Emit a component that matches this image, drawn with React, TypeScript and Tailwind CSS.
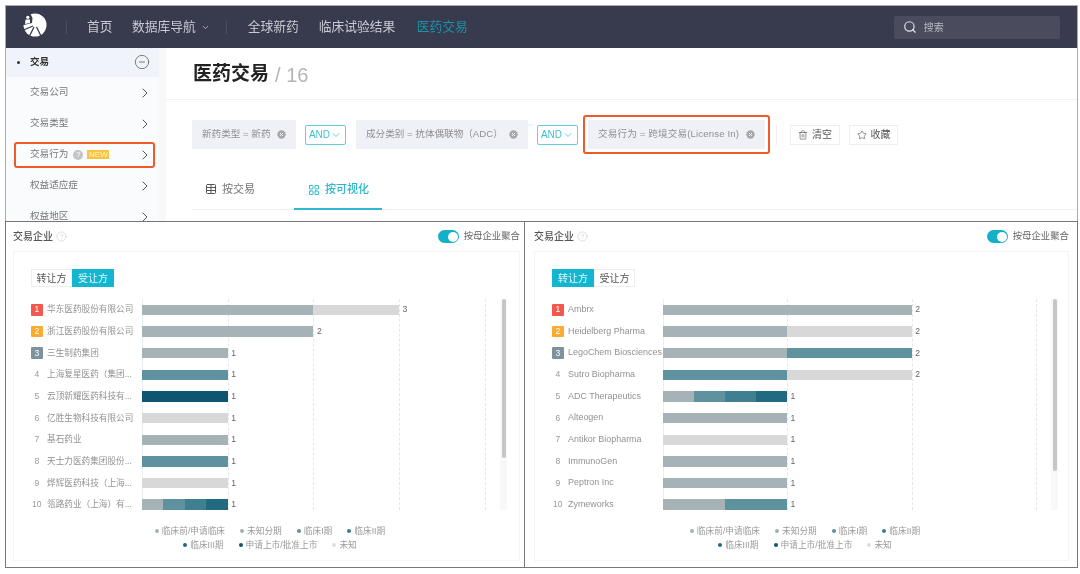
import React from "react";
import { ChevronRight, ChevronDown, CircleMinus, CircleHelp, Search, Table, LayoutGrid, Trash2, Star } from "lucide-react";

const P = "#a5b3b6", A = "#5f929f", B = "#3f7f91", C = "#226a82", D = "#0f5570", U = "#d8d8d8";
type Row = { name: string; total: number; segs: [string, number][] };

const leftRows: Row[] = [
  { name: "华东医药股份有限公司", total: 3, segs: [[P, 2], [U, 1]] },
  { name: "浙江医药股份有限公司", total: 2, segs: [[P, 2]] },
  { name: "三生制药集团", total: 1, segs: [[P, 1]] },
  { name: "上海复星医药（集团...", total: 1, segs: [[A, 1]] },
  { name: "云顶新耀医药科技有...", total: 1, segs: [[D, 1]] },
  { name: "亿胜生物科技有限公司", total: 1, segs: [[U, 1]] },
  { name: "基石药业", total: 1, segs: [[P, 1]] },
  { name: "天士力医药集团股份...", total: 1, segs: [[A, 1]] },
  { name: "烨辉医药科技（上海...", total: 1, segs: [[U, 1]] },
  { name: "瓴路药业（上海）有...", total: 1, segs: [[P, 0.25], [A, 0.25], [B, 0.25], [C, 0.25]] },
];
const rightRows: Row[] = [
  { name: "Ambrx", total: 2, segs: [[P, 2]] },
  { name: "Heidelberg Pharma", total: 2, segs: [[P, 1], [U, 1]] },
  { name: "LegoChem Biosciences", total: 2, segs: [[P, 1], [A, 1]] },
  { name: "Sutro Biopharma", total: 2, segs: [[A, 1], [U, 1]] },
  { name: "ADC Therapeutics", total: 1, segs: [[P, 0.25], [A, 0.25], [B, 0.25], [C, 0.25]] },
  { name: "Alteogen", total: 1, segs: [[P, 1]] },
  { name: "Antikor Biopharma", total: 1, segs: [[U, 1]] },
  { name: "ImmunoGen", total: 1, segs: [[P, 1]] },
  { name: "Peptron Inc", total: 1, segs: [[P, 1]] },
  { name: "Zymeworks", total: 1, segs: [[P, 0.5], [A, 0.5]] },
];

const legend1: [string, string][] = [["临床前/申请临床", P], ["未知分期", "#9fb0b3"], ["临床I期", A], ["临床II期", "#3a7d90"]];
const legend2: [string, string][] = [["临床III期", C], ["申请上市/批准上市", D], ["未知", "#dddddd"]];

function ChipX() {
  return (
    <svg width="9" height="9" viewBox="0 0 9 9" className="shrink-0">
      <circle cx="4.5" cy="4.5" r="4.2" fill="#a8a8ac" />
      <path d="M3 3l3 3M6 3l-3 3" stroke="#eef0f6" strokeWidth="1" />
    </svg>
  );
}

function Chip({ text, w }: { text: string; w: string }) {
  return (
    <div className={`${w} h-[29px] bg-[#f0f1f7] flex items-center justify-between pl-[10px] pr-[10px] text-[9.6px] text-[#8f8f94] whitespace-nowrap`}>
      <span>{text}</span>
      <ChipX />
    </div>
  );
}

function And({ ml, w }: { ml: string; w: string }) {
  return (
    <div className={`${ml} ${w} h-[20px] border border-[#5fd0e0] rounded-[2px] flex items-center justify-center text-[10px] text-[#3dbfd6]`}>
      AND<ChevronDown size={12} strokeWidth={1.5} />
    </div>
  );
}

function SideItem({ label, children, boxed }: { label: string; children?: React.ReactNode; boxed?: boolean }) {
  return (
    <div className={boxed ? "h-[26px] ml-[8px] mr-[4px] my-[2.5px] pl-[14px] pr-[0.5px] flex items-center border-2 border-[#ef5a2a] rounded-[3px]" : "h-[31px] pl-[24px] pr-[6.5px] flex items-center"}>
      <span className="text-[9.6px] text-[#777]">{label}</span>
      {children}
      <ChevronRight size={16} strokeWidth={1.5} className="ml-auto text-[#555]" />
    </div>
  );
}

function Badge({ i }: { i: number }) {
  if (i > 2) return <span className="w-[11.5px] shrink-0 flex justify-center text-[8.5px] text-[#999] whitespace-nowrap">{i + 1}</span>;
  const bg = ["bg-[#f4574e]", "bg-[#fbab2f]", "bg-[#7e929e]"][i];
  return <span className={`${bg} w-[11.5px] h-[11.5px] shrink-0 rounded-[1px] flex items-center justify-center text-[8.5px] text-white`}>{i + 1}</span>;
}

function Chart({ rows, unit, labelCls, scrollH, gridCount, firstTab }: { rows: Row[]; unit: number; labelCls: string; scrollH: string; gridCount: number; firstTab: boolean }) {
  return (
    <div className="flex-1 border border-[#f3f4f6] flex flex-col pl-[17px] pr-[8px] pt-[17px]">
      <div className="flex h-[18px] text-[10px] w-fit">
        <div className={firstTab ? "w-[42px] bg-[#13b5cf] text-[#e6f8fb] flex items-center justify-center" : "w-[41px] border border-[#eee] text-[#555] flex items-center justify-center"}>转让方</div>
        <div className={firstTab ? "w-[41px] border border-[#eee] text-[#555] flex items-center justify-center" : "w-[42px] bg-[#13b5cf] text-[#e6f8fb] flex items-center justify-center"}>受让方</div>
      </div>
      <div className="relative mt-[12px] h-[211px] overflow-hidden flex">
        <div className={`absolute top-0 bottom-0 ${gridCount === 4 ? "left-[111px]" : "left-[110.7px]"} flex border-l border-[#e7edf3]`}>
          {Array.from({ length: gridCount }).map((_, i) => (
            <div key={i} className={`${gridCount === 4 ? "w-[85.7px]" : "w-[124.6px]"} border-r border-dashed border-[#e6e6e6]`} />
          ))}
        </div>
        <div className={`absolute top-0 bottom-0 ${gridCount === 4 ? "left-[469px]" : "left-[499px]"} w-[7px] bg-[#f8f8f8] flex justify-center`}>
          <div className={`w-[4px] ${scrollH} bg-[#c6c6c6] rounded-[2px]`} />
        </div>
        <div className="relative flex flex-col">
          {rows.map((r, i) => (
            <div key={r.name} className="h-[21.67px] shrink-0 flex items-center">
              <Badge i={i} />
              <span className={`${labelCls} shrink-0 pl-[4.5px] text-[#929292] whitespace-nowrap`}>{r.name}</span>
              <div className="flex items-center h-[10.5px]">
                {r.segs.map(([c, n], k) => (
                  <div key={k} className="h-[10.5px]" style={{ background: c, width: n * unit }} />
                ))}
                <span className="ml-[3.5px] text-[8.6px] text-[#666]">{r.total}</span>
              </div>
            </div>
          ))}
        </div>
      </div>
      <div className="pr-[2px] mt-[13.5px] text-[8.7px] text-[#999] leading-[14.5px]">
        {[legend1, legend2].map((row, i) => (
          <div key={i} className="flex justify-center gap-[15px]">
            {row.map(([t, c]) => (
              <span key={t} className="flex items-center gap-[3px] whitespace-nowrap">
                <span className="w-[4px] h-[4px] rounded-full" style={{ background: c }} />
                {t}
              </span>
            ))}
          </div>
        ))}
      </div>
    </div>
  );
}

function PanelHead() {
  return (
    <div className="h-[29px] shrink-0 flex items-center">
      <span className="text-[10px] font-medium text-[#555]">交易企业</span>
      <CircleHelp size={11} strokeWidth={1} className="ml-[3px] text-[#bbb]" />
      <div className="ml-auto w-[21px] h-[13px] rounded-full bg-[#13b0c9] flex items-center justify-end pr-[1.5px]">
        <span className="w-[10px] h-[10px] rounded-full bg-white" />
      </div>
      <span className="ml-[4.5px] text-[9.4px] text-[#666]">按母企业聚合</span>
    </div>
  );
}

export default function App() {
  const font = { fontFamily: '"Liberation Sans","Noto Sans CJK SC",sans-serif' };
  return (
    <div className="w-[1080px] h-[574px] bg-white overflow-hidden pl-[5px] pt-[5px] blur-[0.4px]" style={font}>
      <div className="w-[1073px] h-[216px] flex flex-col overflow-hidden border-l border-r border-t border-[#aaaab0]">
        <div className="h-[42px] shrink-0 bg-[#383a4e] flex items-center text-[12.75px] text-[#c8cad2] whitespace-nowrap">
          <svg width="24" height="24" viewBox="0 0 24 24" className="ml-[17px] mb-[4px] shrink-0">
            <circle cx="12" cy="12" r="11.5" fill="#fff" />
            <path d="M0 0H7L9.5 5 9 10 1 12 0 12z" fill="#383a4e" />
            <circle cx="4.8" cy="4.3" r="1.6" fill="#fff" />
            <path d="M2.5 6.5h4.5v3.5L2 11z" fill="#fff" />
            <path d="M10 13 0.5 17M11 14 6 24M13.5 14 18 23" stroke="#383a4e" strokeWidth="1.3" fill="none" />
          </svg>
          <span className="ml-[19px] w-px h-[13px] bg-[#4c4e60]" />
          <span className="ml-[20px]">首页</span>
          <span className="ml-[19.5px]">数据库导航</span>
          <ChevronDown size={9} strokeWidth={2} className="ml-[5px]" />
          <span className="ml-[16px] w-px h-[13px] bg-[#4c4e60]" />
          <span className="ml-[21px]">全球新药</span>
          <span className="ml-[20px]">临床试验结果</span>
          <span className="ml-[21.5px] text-[#1a92a8]">医药交易</span>
          <div className="ml-[426px] w-[166px] h-[23px] rounded-[2px] bg-[#4a4c5e] flex items-center pl-[9px] text-[10px] text-[#b8bac2]">
            <Search size={14} strokeWidth={2} className="text-[#e4e5ea]" />
            <span className="ml-[7px]">搜索</span>
          </div>
        </div>
        <div className="flex-1 flex min-h-0">
          <div className="w-[153px] shrink-0 bg-[#fafbfd]">
            <div className="h-[29px] bg-[#f0f3f9] flex items-center pl-[11px] pr-[9.5px]">
              <span className="w-[3px] h-[3px] rounded-full bg-[#333]" />
              <span className="ml-[10px] text-[9.6px] font-bold text-[#333]">交易</span>
              <CircleMinus size={16} strokeWidth={1} className="ml-auto mb-[2px] text-[#444]" />
            </div>
            <SideItem label="交易公司" />
            <SideItem label="交易类型" />
            <SideItem label="交易行为" boxed>
              <span className="ml-[5px] w-[10px] h-[10px] rounded-full bg-[#c4c4c4] text-white text-[7.5px] flex items-center justify-center">?</span>
              <span className="ml-[4px] w-[22px] h-[9.5px] bg-[#fcc33c] text-[#fff6d8] text-[8px] flex items-center justify-center">NEW</span>
            </SideItem>
            <SideItem label="权益适应症" />
            <SideItem label="权益地区" />
          </div>
          <div className="w-[7px] shrink-0 bg-[#f8f8f9]" />
          <div className="flex-1 min-w-0">
            <div className="h-[52px] pt-[2px] border-b border-[#f2f2f4] flex items-center pl-[27px]">
              <span className="text-[19px] font-semibold text-[#222]">医药交易</span>
              <span className="ml-[6px] text-[20px] font-medium text-[#b5b5b8]">/ 16</span>
            </div>
            <div className="flex items-center h-[39px] mt-[15px] pl-[26px]">
              <Chip text="新药类型 = 新药" w="w-[104px]" />
              <And ml="ml-[9px]" w="w-[41px]" />
              <div className="ml-[10px]"><Chip text="成分类别 = 抗体偶联物（ADC）" w="w-[172px]" /></div>
              <And ml="ml-[9px]" w="w-[41px]" />
              <div className="ml-[5px] w-[187px] h-[39px] border-2 border-[#ef5a2a] rounded-[3px] p-[3px] flex items-center tracking-[0.14px]">
                <Chip text="交易行为 = 跨境交易(License In)" w="w-full" />
              </div>
              <span className="ml-[6px] w-px h-[20px] bg-[#eee]" />
              <div className="ml-[13px] w-[50px] h-[20px] border border-[#eee] flex items-center justify-center gap-[4px] text-[10px] text-[#555]">
                <Trash2 size={10} strokeWidth={1.5} />清空
              </div>
              <div className="ml-[9px] w-[49px] h-[20px] border border-[#eee] flex items-center justify-center gap-[4px] text-[10px] text-[#555]">
                <Star size={10} strokeWidth={1.5} />收藏
              </div>
            </div>
            <div className="ml-[26px] mt-[15px] h-[41px] border-b border-[#f0f0f2] flex text-[11px]">
              <div className="w-[102px] pl-[13px] flex items-center gap-[5px] text-[#777]">
                <Table size={12} strokeWidth={2} className="text-[#555]" />按交易
              </div>
              <div className="w-[88px] h-[41px] pt-[2px] pl-[14px] flex items-center gap-[5px] font-medium text-[#2db6cf] border-b-2 border-[#2fb9d2]">
                <LayoutGrid size={12} strokeWidth={2} />按可视化
              </div>
            </div>
          </div>
        </div>
      </div>
      <div className="w-[1073px] h-[347px] flex">
        <div className="w-[520px] shrink-0 border border-[#77777b] pl-[7px] pr-[4px] pb-[6px] flex flex-col">
          <PanelHead />
          <Chart rows={leftRows} unit={85.7} labelCls="w-[99.5px] text-[8.65px]" scrollH="h-[159px]" gridCount={4} firstTab={false} />
        </div>
        <div className="flex-1 border-t border-r border-b border-[#77777b] pl-[9px] pr-[8px] pb-[6px] flex flex-col">
          <PanelHead />
          <Chart rows={rightRows} unit={124.6} labelCls="w-[99px] text-[8.95px]" scrollH="h-[172px]" gridCount={3} firstTab={true} />
        </div>
      </div>
    </div>
  );
}
